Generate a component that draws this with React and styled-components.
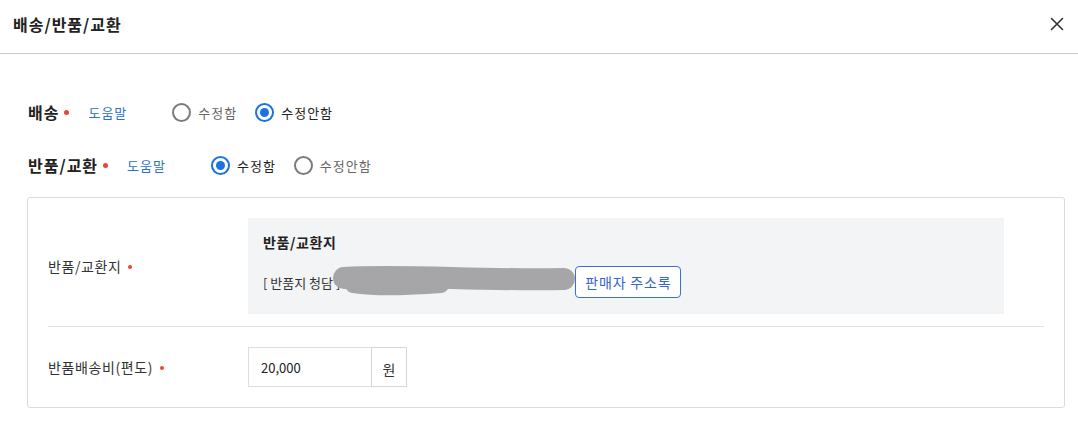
import React, { useState } from "react";
import styled, { createGlobalStyle } from "styled-components";

const GlobalStyle = createGlobalStyle`
  body {
    margin: 0;
    background: #fff;
    font-family: "Noto Sans CJK KR", "Noto Sans", sans-serif;
    color: #222;
  }
  * { box-sizing: border-box; }
`;

const App = () => {
  const [shipping, setShipping] = useState("keep");
  const [returns, setReturns] = useState("edit");

  return (
    <Modal>
      <GlobalStyle />
      <Header>
        <Title>배송/반품/교환</Title>
        <CloseButton aria-label="닫기">
          <svg width="14" height="14" viewBox="0 0 14 14">
            <path d="M1.5 1.5 L12.5 12.5 M12.5 1.5 L1.5 12.5" stroke="#333" strokeWidth="1.6" strokeLinecap="round" />
          </svg>
        </CloseButton>
      </Header>

      <Body>
        <OptionRow>
          <RowLabel>
            배송 <Dot />
          </RowLabel>
          <HelpLink>도움말</HelpLink>
          <RadioGroup>
            <RadioOption label="수정함" checked={shipping === "edit"} onClick={() => setShipping("edit")} />
            <RadioOption label="수정안함" checked={shipping === "keep"} onClick={() => setShipping("keep")} />
          </RadioGroup>
        </OptionRow>

        <OptionRow>
          <RowLabel>
            반품/교환 <Dot />
          </RowLabel>
          <HelpLink>도움말</HelpLink>
          <RadioGroup>
            <RadioOption label="수정함" checked={returns === "edit"} onClick={() => setReturns("edit")} />
            <RadioOption label="수정안함" checked={returns === "keep"} onClick={() => setReturns("keep")} />
          </RadioGroup>
        </OptionRow>

        <Card>
          <FieldRow $first>
            <FieldLabel>
              반품/교환지 <SmallDot />
            </FieldLabel>
            <AddressBox>
              <AddressTitle>반품/교환지</AddressTitle>
              <AddressLine>
                <AddressText>[ 반품지 청담 ]</AddressText>
                <Redaction width="246" height="34" viewBox="0 0 246 34">
                  <path d="M13 13 C 70 9, 150 16, 233 14" stroke="#a6a6a8" strokeWidth="22" strokeLinecap="round" fill="none" />
                  <path d="M22 20 C 50 24, 80 22, 110 20" stroke="#a6a6a8" strokeWidth="16" strokeLinecap="round" fill="none" />
                </Redaction>
                <OutlineButton>판매자 주소록</OutlineButton>
              </AddressLine>
            </AddressBox>
          </FieldRow>
          <FieldRow>
            <FieldLabel>
              반품배송비(편도) <SmallDot />
            </FieldLabel>
            <InputGroup>
              <PriceInput defaultValue="20,000" />
              <Addon>원</Addon>
            </InputGroup>
          </FieldRow>
        </Card>
      </Body>
    </Modal>
  );
};

const RadioOption = ({ label, checked, onClick }) => (
  <RadioLabel $checked={checked} onClick={onClick}>
    <RadioCircle $checked={checked} />
    {label}
  </RadioLabel>
);

const Modal = styled.div`
  width: 1078px;
  height: 430px;
  background: #fff;
`;

const Header = styled.div`
  height: 54px;
  display: flex;
  align-items: center;
  justify-content: space-between;
  padding: 0 13px 6px 13px;
  border-bottom: 1px solid #c9c9c9;
`;

const Title = styled.h2`
  margin: 0;
  font-size: 16px;
  font-weight: 700;
  letter-spacing: 1px;
  color: #222;
`;

const CloseButton = styled.button`
  border: 0;
  background: none;
  padding: 0;
  margin-right: 1px;
  display: flex;
  cursor: pointer;
`;

const Body = styled.div`
  padding: 42px 13px 0 27px;
  display: flex;
  flex-direction: column;
`;

const OptionRow = styled.div`
  height: 32px;
  display: flex;
  align-items: center;
  padding-left: 1px;
  margin-bottom: 21px;
`;

const RowLabel = styled.span`
  display: inline-flex;
  align-items: center;
  gap: 5px;
  font-size: 16px;
  font-weight: 700;
  letter-spacing: 1px;
  color: #222;
  margin-right: 19px;
`;

const Dot = styled.span`
  width: 5px;
  height: 5px;
  border-radius: 50%;
  background: #e5453a;
`;

const SmallDot = styled.span`
  display: inline-block;
  width: 4px;
  height: 4px;
  border-radius: 50%;
  background: #e5453a;
  margin-left: 3px;
  vertical-align: middle;
  margin-bottom: 2px;
`;

const HelpLink = styled.a`
  font-size: 13px;
  letter-spacing: 1px;
  color: #2a72c9;
  cursor: pointer;
  margin-right: 45px;
`;

const RadioGroup = styled.div`
  display: flex;
  align-items: center;
  gap: 18px;
`;

const RadioLabel = styled.label`
  display: inline-flex;
  align-items: center;
  gap: 7px;
  font-size: 13px;
  letter-spacing: 1px;
  color: ${(p) => (p.$checked ? "#222" : "#666")};
  cursor: pointer;
`;

const RadioCircle = styled.span`
  width: 19px;
  height: 19px;
  border-radius: 50%;
  border: 2px solid ${(p) => (p.$checked ? "#1a73e0" : "#7b7b7b")};
  display: flex;
  align-items: center;
  justify-content: center;
  &::after {
    content: "";
    width: 9px;
    height: 9px;
    border-radius: 50%;
    background: ${(p) => (p.$checked ? "#1a73e0" : "transparent")};
  }
`;

const Card = styled.div`
  margin-top: -5px;
  border: 1px solid #dcdcdc;
  border-radius: 3px;
  padding: 20px;
`;

const FieldRow = styled.div`
  display: flex;
  align-items: center;
  padding: ${(p) => (p.$first ? "0 0 12px" : "20px 0 0")};
  border-bottom: ${(p) => (p.$first ? "1px solid #e3e3e3" : "none")};
`;

const FieldLabel = styled.div`
  width: 200px;
  flex-shrink: 0;
  font-size: 14px;
  letter-spacing: 0.6px;
  color: #333;
`;

const AddressBox = styled.div`
  width: 756px;
  background: #f3f4f6;
  padding: 14px 15px 15px;
  display: flex;
  flex-direction: column;
  gap: 13px;
`;

const AddressTitle = styled.div`
  font-size: 14px;
  font-weight: 700;
  letter-spacing: 0.6px;
  line-height: 20px;
  color: #222;
`;

const AddressLine = styled.div`
  display: flex;
  align-items: center;
`;

const AddressText = styled.span`
  font-size: 13px;
  color: #333;
`;

const Redaction = styled.svg`
  margin-left: -9px;
  margin-right: -2px;
  display: block;
`;

const OutlineButton = styled.button`
  height: 32px;
  padding: 0 9px;
  border: 1px solid #3a6fd8;
  border-radius: 4px;
  background: #fff;
  color: #3565c9;
  font-family: inherit;
  font-size: 14px;
  letter-spacing: 0.8px;
  cursor: pointer;
`;

const InputGroup = styled.div`
  display: flex;
  height: 40px;
`;

const PriceInput = styled.input`
  width: 123px;
  height: 40px;
  border: 1px solid #dedede;
  border-right: 0;
  padding: 0 12px;
  font-family: inherit;
  font-size: 13px;
  color: #222;
  outline: none;
`;

const Addon = styled.span`
  width: 36px;
  height: 40px;
  border: 1px solid #d6d6d6;
  display: flex;
  align-items: center;
  justify-content: center;
  padding-top: 3px;
  font-size: 14px;
  color: #333;
`;

export default App;
